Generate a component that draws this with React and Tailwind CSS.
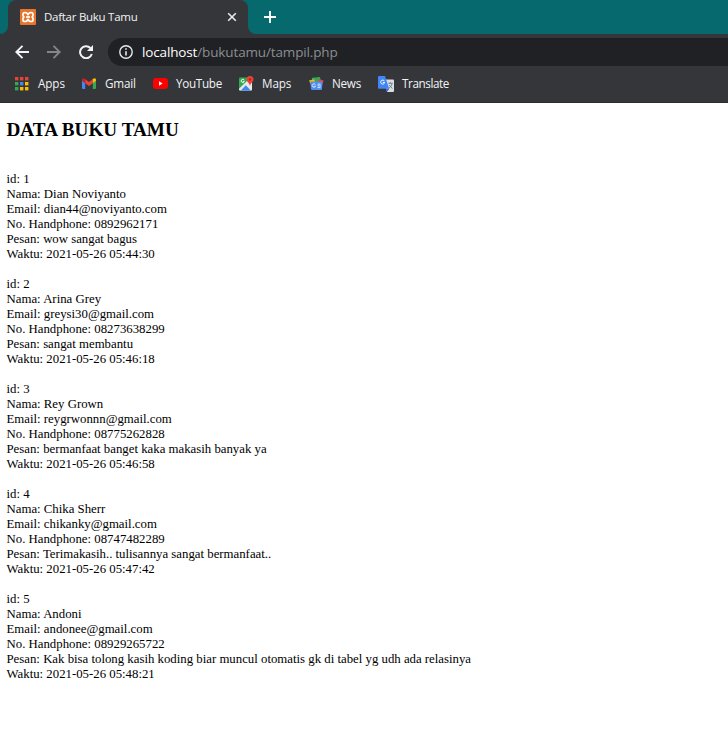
import React from "react";

const entries = [
  ["1", "Dian Noviyanto", "dian44@noviyanto.com", "0892962171", "wow sangat bagus", "2021-05-26 05:44:30"],
  ["2", "Arina Grey", "greysi30@gmail.com", "08273638299", "sangat membantu", "2021-05-26 05:46:18"],
  ["3", "Rey Grown", "reygrwonnn@gmail.com", "08775262828", "bermanfaat banget kaka makasih banyak ya", "2021-05-26 05:46:58"],
  ["4", "Chika Sherr", "chikanky@gmail.com", "08747482289", "Terimakasih.. tulisannya sangat bermanfaat..", "2021-05-26 05:47:42"],
  ["5", "Andoni", "andonee@gmail.com", "08929265722", "Kak bisa tolong kasih koding biar muncul otomatis gk di tabel yg udh ada relasinya", "2021-05-26 05:48:21"],
];
const labels = ["id", "Nama", "Email", "No. Handphone", "Pesan", "Waktu"];

function XamppIcon() {
  return (
    <svg className="ml-3 size-4 shrink-0" viewBox="0 0 16 16">
      <rect width="16" height="16" rx="1" fill="#e8752b" />
      <path d="M8 5.8Q7.2 3.5 5 3.5Q2.9 3.6 2.9 5.6Q2.9 7.2 3.9 8Q2.9 8.8 2.9 10.4Q2.9 12.4 5 12.5Q7.2 12.5 8 10.2Q8.8 12.5 11 12.5Q13.1 12.4 13.1 10.4Q13.1 8.8 12.1 8Q13.1 7.2 13.1 5.6Q13.1 3.6 11 3.5Q8.8 3.5 8 5.8Z" fill="none" stroke="#fff" strokeWidth="1.7" strokeLinejoin="round" />
      <path d="M6 8H10" stroke="#fff" strokeWidth="1.7" />
    </svg>
  );
}

function AppsIcon() {
  const colors = ["#ea4335", "#ea4335", "#ea4335", "#34a853", "#4285f4", "#fbbc04", "#34a853", "#fbbc04", "#fbbc04"];
  return (
    <svg className="ml-px size-[14px] shrink-0" viewBox="0 0 14 14">
      {colors.map((c, i) => (
        <rect key={i} x={(i % 3) * 5} y={Math.floor(i / 3) * 5} width="3.4" height="3.4" fill={c} />
      ))}
    </svg>
  );
}

function GmailIcon() {
  return (
    <svg className="h-[11px] w-[14px] shrink-0" viewBox="0 0 14 11">
      <path d="M0 2V10Q0 11 1 11H3.2V4.7Z" fill="#4285f4" />
      <path d="M14 2V10Q14 11 13 11H10.8V4.7Z" fill="#34a853" />
      <path d="M3.2 1.2L7 4.1L10.8 1.2V5.2L7 8L3.2 5.2Z" fill="#ea4335" />
      <path d="M0 2.8V1.7C0 .2 1.6-.3 2.8.7L3.2 1.2V5.2Z" fill="#c5221f" />
      <path d="M14 2.8V1.7C14 .2 12.4-.3 11.2.7L10.8 1.2V5.2Z" fill="#fbbc04" />
    </svg>
  );
}

function YouTubeIcon() {
  return (
    <svg className="h-[11px] w-[15px] shrink-0" viewBox="0 0 15 11">
      <rect width="15" height="11" rx="3" fill="#f00" />
      <path d="M6 3.3L9.6 5.5L6 7.7Z" fill="#fff" />
    </svg>
  );
}

function MapsIcon() {
  return (
    <svg className="size-[15px] shrink-0" viewBox="0 0 15 15">
      <rect y="1.5" width="13" height="13" rx="1" fill="#34a853" />
      <path d="M0 12.8L8 5L13 6V13.5Q13 14.5 12 14.5H1Q0 14.5 0 13.5Z" fill="#e8eaed" />
      <path d="M1.8 14.5L6.8 9.3L11.8 14.5Z" fill="#4285f4" />
      <path d="M5.2 4.2A1.6 1.6 0 1 0 5.3 5.4H3.8" fill="none" stroke="#fff" strokeWidth=".9" />
      <path d="M11 0A3.5 3.5 0 0 0 7.5 3.5C7.5 6 10.6 6.7 11 10C11.4 6.7 14.5 6 14.5 3.5A3.5 3.5 0 0 0 11 0Z" fill="#ea4335" />
      <circle cx="11" cy="3.4" r="1.2" fill="#a52714" />
    </svg>
  );
}

function NewsIcon() {
  return (
    <svg className="h-[13px] w-[15px] shrink-0" viewBox="0 0 15 13">
      <path d="M3 .8L11 0L12 5H3Z" fill="#34a853" />
      <path d="M0 3.5L5 2.3L7 7L2 8Z" fill="#fbbc04" />
      <path d="M10 2.3L14.7 3.5L13 8L8 6Z" fill="#ea4335" />
      <path d="M1.4 4.5H13.6L13 12Q13 13 12 13H3Q2 13 2 12Z" fill="#4f8df5" />
      <path d="M6.4 7.6A1.7 1.7 0 1 0 6.5 9.2H5.2M8.5 7.2H11.5M8.5 8.9H12M8.5 10.6H11.5" fill="none" stroke="#fff" strokeWidth=".8" />
    </svg>
  );
}

function TranslateIcon() {
  return (
    <svg className="size-4 shrink-0" viewBox="0 0 16 16">
      <path d="M6 3.5H15Q16 3.5 16 4.5V15Q16 16 15 16H9Z" fill="#dadce0" />
      <path d="M10.3 7.3H14.8M12.3 6V7.3M14 7.5C13.5 9.8 12.4 11.3 11 12.2M11.2 9L14.3 12.5" fill="none" stroke="#607d8b" strokeWidth=".9" />
      <path d="M1 0H7L11.2 12.7H1Q0 12.7 0 11.7V1Q0 0 1 0Z" fill="#4285f4" />
      <path d="M7.8 12.7H11.2L9 16Z" fill="#3367d6" />
      <path d="M6.4 5A2 2 0 1 0 6.7 6.4H4.9" fill="none" stroke="#fff" strokeWidth="1" />
    </svg>
  );
}

function TabBar() {
  return (
    <div className="flex h-[34px] bg-[#05696e]">
      <svg className="h-2 w-2 self-end" viewBox="0 0 8 8"><path d="M8 0V8H0A8 8 0 0 0 8 0Z" fill="#35363a" /></svg>
      <div className="flex w-[240px] items-center rounded-t-lg bg-[#35363a]">
        <XamppIcon />
        <span className="ml-2 w-[175px] whitespace-nowrap font-['Open_Sans',sans-serif] text-[11.5px] tracking-[-0.27px] text-[#f1f3f4]">Daftar Buku Tamu</span>
        <svg className="ml-2 size-[10px]" viewBox="0 0 10 10"><path d="M1.2 1.2L8.8 8.8M8.8 1.2L1.2 8.8" stroke="#e8eaed" strokeWidth="1.6" /></svg>
      </div>
      <svg className="h-2 w-2 self-end" viewBox="0 0 8 8"><path d="M0 0V8H8A8 8 0 0 1 0 0Z" fill="#35363a" /></svg>
      <svg className="ml-2 size-3 self-center" viewBox="0 0 12 12"><path d="M6 0V12M0 6H12" stroke="#fff" strokeWidth="1.9" /></svg>
    </div>
  );
}

function Toolbar() {
  return (
    <div className="flex h-[36px] items-center bg-[#35363a]">
      <svg className="ml-[15px] size-[14px]" viewBox="0 0 14 14"><path d="M14 7H1.5M7.5 .8L1.3 7L7.5 13.2" fill="none" stroke="#f1f3f4" strokeWidth="1.9" /></svg>
      <svg className="ml-[18px] size-[14px]" viewBox="0 0 14 14"><path d="M0 7H12.5M6.5 .8L12.7 7L6.5 13.2" fill="none" stroke="#85868a" strokeWidth="1.8" /></svg>
      <svg className="ml-[18px] size-[14px]" viewBox="0 0 14 14">
        <path d="M12.8 9A6 6 0 1 1 11.4 3" fill="none" stroke="#f1f3f4" strokeWidth="2" />
        <path d="M14 0V6H8Z" fill="#f1f3f4" />
      </svg>
      <div className="ml-[15px] flex h-7 flex-1 items-center rounded-l-full bg-[#202124]">
        <svg className="ml-[11px] size-[14px]" viewBox="0 0 14 14">
          <circle cx="7" cy="7" r="6.2" fill="none" stroke="#e8eaed" strokeWidth="1.4" />
          <path d="M7 6.2V10.5M7 3.3V4.8" stroke="#e8eaed" strokeWidth="1.6" />
        </svg>
        <span className="ml-[9px] whitespace-nowrap font-['Open_Sans',sans-serif] text-[13.5px] leading-5 tracking-[-0.14px] text-[#8b8e93]">
          <span className="text-white">localhost</span>/bukutamu/tampil.php
        </span>
      </div>
    </div>
  );
}

function Bookmark({ icon, label, className, labelClass }) {
  return (
    <div className={"flex shrink-0 items-center " + className}>
      {icon}
      <span className={"whitespace-nowrap " + labelClass}>{label}</span>
    </div>
  );
}

function BookmarksBar() {
  return (
    <div className="flex h-[33px] items-center border-b border-[#2b2c2f] bg-[#35363a] pb-1 pl-[14px] font-['Open_Sans',sans-serif] text-[11.7px] text-[#f1f3f4]">
      <Bookmark icon={<AppsIcon />} label="Apps" className="w-[68px]" labelClass="ml-[9px] tracking-[-0.1px]" />
      <Bookmark icon={<GmailIcon />} label="Gmail" className="w-[71px]" labelClass="ml-[9px] tracking-[-0.2px]" />
      <Bookmark icon={<YouTubeIcon />} label="YouTube" className="w-[86px]" labelClass="ml-2 tracking-[-0.3px]" />
      <Bookmark icon={<MapsIcon />} label="Maps" className="w-[70px]" labelClass="ml-2 tracking-[-0.1px]" />
      <Bookmark icon={<NewsIcon />} label="News" className="w-[69px]" labelClass="ml-2 tracking-[-0.25px]" />
      <Bookmark icon={<TranslateIcon />} label="Translate" className="" labelClass="ml-2 tracking-[-0.4px]" />
    </div>
  );
}

export default function App() {
  return (
    <div className="h-[736px] w-[728px] overflow-hidden bg-white">
      <TabBar />
      <Toolbar />
      <BookmarksBar />
      <main className="px-[6.5px] pt-4 font-['Liberation_Serif',serif] text-black">
        <h2 className="text-[19.2px] font-bold leading-[22px]">DATA BUKU TAMU</h2>
        <div className="mt-[31px] flex flex-col gap-[15px] text-[12.8px] leading-[15px]">
          {entries.map((entry) => (
            <div key={entry[0]}>
              {entry.map((value, i) => (
                <p key={labels[i]} className="whitespace-nowrap">{labels[i]}: {value}</p>
              ))}
            </div>
          ))}
        </div>
      </main>
    </div>
  );
}
